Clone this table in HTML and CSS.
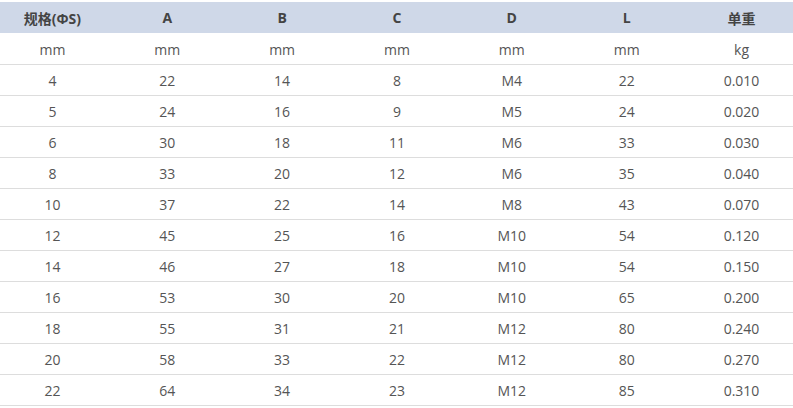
FILE: index.html
```html
<!DOCTYPE html>
<html lang="zh-CN">
<head>
<meta charset="utf-8">
<title>规格表</title>
<link rel="stylesheet" href="styles.css">
</head>
<body>
<div class="wrap">
<table class="spec">
<thead>
<tr><th>规格(ΦS)</th><th>A</th><th>B</th><th>C</th><th>D</th><th>L</th><th>单重</th></tr>
</thead>
<tbody>
<tr><td>mm</td><td>mm</td><td>mm</td><td>mm</td><td>mm</td><td>mm</td><td>kg</td></tr>
<tr><td>4</td><td>22</td><td>14</td><td>8</td><td>M4</td><td>22</td><td>0.010</td></tr>
<tr><td>5</td><td>24</td><td>16</td><td>9</td><td>M5</td><td>24</td><td>0.020</td></tr>
<tr><td>6</td><td>30</td><td>18</td><td>11</td><td>M6</td><td>33</td><td>0.030</td></tr>
<tr><td>8</td><td>33</td><td>20</td><td>12</td><td>M6</td><td>35</td><td>0.040</td></tr>
<tr><td>10</td><td>37</td><td>22</td><td>14</td><td>M8</td><td>43</td><td>0.070</td></tr>
<tr><td>12</td><td>45</td><td>25</td><td>16</td><td>M10</td><td>54</td><td>0.120</td></tr>
<tr><td>14</td><td>46</td><td>27</td><td>18</td><td>M10</td><td>54</td><td>0.150</td></tr>
<tr><td>16</td><td>53</td><td>30</td><td>20</td><td>M10</td><td>65</td><td>0.200</td></tr>
<tr><td>18</td><td>55</td><td>31</td><td>21</td><td>M12</td><td>80</td><td>0.240</td></tr>
<tr><td>20</td><td>58</td><td>33</td><td>22</td><td>M12</td><td>80</td><td>0.270</td></tr>
<tr><td>22</td><td>64</td><td>34</td><td>23</td><td>M12</td><td>85</td><td>0.310</td></tr>
</tbody>
</table>
</div>
</body>
</html>
```
FILE: styles.css
```css
html, body {
  margin: 0;
  padding: 0;
  background: #fff;
}
.wrap {
  padding-top: 2px;
  overflow: hidden;
  width: 793px;
}
.spec {
  border-collapse: collapse;
  table-layout: fixed;
  width: 804px;
  margin-left: -5px;
  font-family: "Open Sans", "Noto Sans CJK SC", sans-serif;
  font-size: 14px;
  color: #555;
}
.spec th, .spec td {
  text-align: center;
  padding: 0;
}
.spec th {
  background: #cfd8e8;
  height: 31px;
  font-weight: bold;
  color: #444;
  border-bottom: 1px solid #fff;
}
.spec td {
  height: 30px;
  border-bottom: 1px solid #ddd;
}
```
